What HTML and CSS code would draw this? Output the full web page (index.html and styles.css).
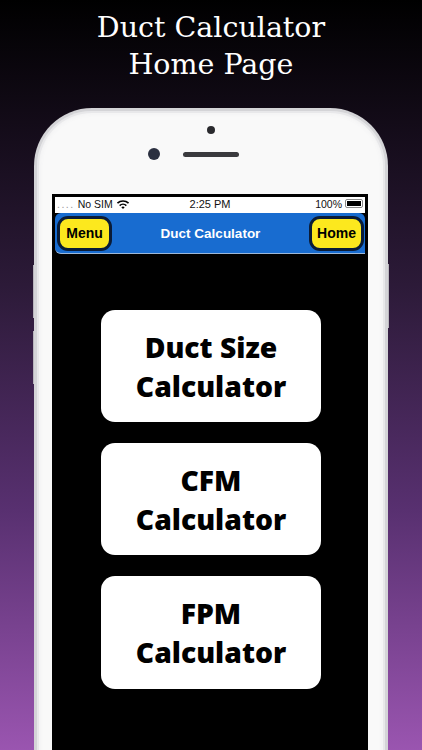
FILE: index.html
```html
<!DOCTYPE html>
<html>
<head>
  <title>Duct Calculator</title>
  <link rel="stylesheet" href="styles.css">
</head>
<body>
  <div class="page">
    <h1 class="title">Duct Calculator<br>Home Page</h1>
    <div class="phone">
      <div class="side-button side-left-one"></div>
      <div class="side-button side-left-two"></div>
      <div class="side-button side-right"></div>
      <div class="phone-top">
        <div class="sensor"></div>
        <div class="camera-row">
          <div class="camera"></div>
          <div class="speaker"></div>
        </div>
      </div>
      <div class="screen">
        <div class="status-bar">
          <div class="status-left">
            <span class="signal">....</span>
            <span>No SIM</span>
            <svg class="wifi" viewBox="0 0 24 18" width="14" height="10">
              <path d="M1 6.5a16 16 0 0 1 22 0l-2 2.2a13 13 0 0 0-18 0z" fill="#000"/>
              <path d="M5 10.7a10.300 10.300 0 0 1 14 0l-2 2.200a7.300 7.300 0 0 0-10 0z" fill="#000"/>
              <path d="M9 15a4.500 4.500 0 0 1 6 0l-3 3z" fill="#000"/>
            </svg>
          </div>
          <div class="status-time">2:25 PM</div>
          <div class="status-right">
            <span>100%</span>
            <div class="battery"><div class="battery-fill"></div></div>
          </div>
        </div>
        <div class="nav-bar">
          <div class="nav-button">Menu</div>
          <div class="nav-title">Duct Calculator</div>
          <div class="nav-button">Home</div>
        </div>
        <div class="menu">
          <div class="menu-card">Duct Size<br>Calculator</div>
          <div class="menu-card">CFM<br>Calculator</div>
          <div class="menu-card">FPM<br>Calculator</div>
        </div>
      </div>
    </div>
  </div>
</body>
</html>
```

FILE: styles.css
```css
html, body {
  margin: 0;
  padding: 0;
}

.page {
  width: 422px;
  height: 750px;
  overflow: hidden;
  background: linear-gradient(to bottom, #000000 0%, #2c1a38 38%, #583070 68%, #9a55b0 100%);
  font-family: "Liberation Sans", Arial, sans-serif;
}

.title {
  margin: 0;
  height: 108px;
  padding-top: 9px;
  box-sizing: border-box;
  color: #ffffff;
  font-family: "DejaVu Serif", serif;
  font-size: 28.500px;
  font-weight: normal;
  line-height: 37px;
  text-align: center;
}

.phone {
  position: relative;
  width: 354px;
  height: 700px;
  margin-left: 34px;
  box-sizing: border-box;
  padding: 0 15px;
  background-color: #f9f9f9;
  border: 3px solid #d4d4d7;
  border-bottom: none;
  border-radius: 58px 58px 0 0;
  box-shadow: inset 0 0 0 2px #e8e8ea, inset 0 0 4px 3px #f1f1f2;
}

/* volume and power buttons, they stick out a little past the frame */
.side-button {
  position: absolute;
  width: 1px;
  background-color: #b9b6bd;
}

.side-left-one {
  left: -4px;
  top: 154px;
  height: 53px;
}

.side-left-two {
  left: -4px;
  top: 220px;
  height: 53px;
}

.side-right {
  right: -4px;
  top: 153px;
  height: 64px;
}

.phone-top {
  height: 83px;
  display: flex;
  flex-direction: column;
  align-items: center;
}

.sensor {
  width: 8px;
  height: 8px;
  margin-top: 15px;
  background-color: #2a2a2e;
  border-radius: 50%;
}

.camera-row {
  display: flex;
  align-items: center;
  margin-top: 14px;
  margin-left: -35px;
}

.camera {
  width: 12px;
  height: 12px;
  margin-right: 23px;
  background-color: #2b3040;
  border-radius: 50%;
}

.speaker {
  width: 56px;
  height: 5px;
  background-color: #3a3a3e;
  border-radius: 3px;
}

.screen {
  width: 316px;
  height: 600px;
  box-sizing: border-box;
  border: 3px solid #000000;
  background-color: #000000;
}

.status-bar {
  height: 16px;
  box-sizing: border-box;
  display: flex;
  align-items: center;
  justify-content: space-between;
  padding: 0 2px 3px 2px;
  background-color: #ffffff;
  color: #111111;
  font-size: 10.500px;
}

.status-left,
.status-right {
  width: 100px;
  display: flex;
  align-items: center;
  gap: 3px;
}

.status-right {
  justify-content: flex-end;
}

.status-time {
  font-size: 11px;
}

.signal {
  color: #999999;
  letter-spacing: 1.5px;
}

.battery {
  width: 18px;
  height: 9px;
  padding: 1px;
  box-sizing: border-box;
  border: 1px solid #888888;
  border-radius: 2px;
}

.battery-fill {
  height: 100%;
  background-color: #000000;
}

.nav-bar {
  height: 41px;
  display: flex;
  align-items: center;
  justify-content: space-between;
  box-sizing: border-box;
  padding: 0 1px 0 2px;
  background-color: #186cd0;
  border-bottom: 1px solid #9db8d8;
  border-radius: 6px 6px 0 6px;
}

.nav-title {
  color: #ffffff;
  font-size: 13.500px;
  font-weight: bold;
}

.nav-button {
  width: 55px;
  height: 35px;
  display: flex;
  align-items: center;
  justify-content: center;
  box-sizing: border-box;
  background-color: #fce81e;
  border: 3px solid #0a1c38;
  border-radius: 11px;
  color: #000000;
  font-size: 14px;
  font-weight: bold;
}

.menu {
  display: flex;
  flex-direction: column;
  align-items: center;
  gap: 21px;
  padding-top: 56px;
  padding-left: 2px;
}

.menu-card {
  width: 220px;
  height: 112px;
  display: flex;
  align-items: center;
  justify-content: center;
  box-sizing: border-box;
  padding-top: 1px;
  background-color: #ffffff;
  border-radius: 14px;
  color: #000000;
  font-family: "Open Sans", sans-serif;
  font-size: 28.300px;
  font-weight: 800;
  line-height: 39px;
  text-align: center;
}

.menu-card:last-child {
  height: 113px;
}
```
